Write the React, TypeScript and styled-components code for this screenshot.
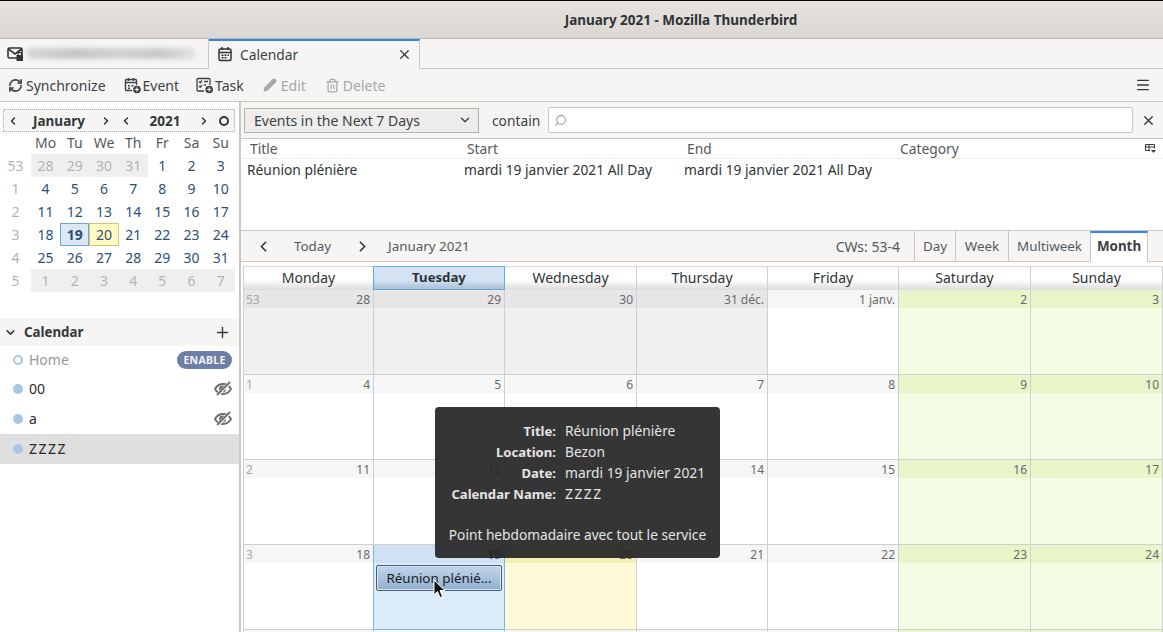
import React from 'react'
import styled, { createGlobalStyle } from 'styled-components'
import { RefreshCw, Pencil, Trash2, Plus, ChevronDown, ChevronLeft, ChevronRight, X, Search, Menu } from 'lucide-react'

const Global = createGlobalStyle`
  html, body { margin: 0; padding: 0; overflow: hidden; background: #fff; }
  * { box-sizing: border-box; }
  body { font-family: "Noto Sans", sans-serif; font-size: 13.8px; color: #2e3436; }
`

const Window = styled.div`
  width: 1163px;
  height: 632px;
  position: relative;
  overflow: hidden;
  display: flex;
  flex-direction: column;
`

const TitleBar = styled.div`
  height: 39px;
  flex: none;
  border-top: 1px solid #000;
  border-bottom: 1px solid #bfb8b1;
  background: linear-gradient(#e6e3df, #dbd7d2);
  display: flex;
  align-items: center;
  justify-content: center;
  padding-left: 199px;
  font-size: 13.5px;
  font-weight: 700;
  color: #2e3436;
`

const TabStrip = styled.div`
  height: 30px;
  flex: none;
  display: flex;
  background: #f6f5f4;
  border-bottom: 1px solid #cdc7c2;
`

const InactiveTab = styled.div`
  width: 209px;
  display: flex;
  align-items: center;
  gap: 3px;
  padding-left: 7px;
  border-right: 1px solid #cdc7c2;
`

const Smudge = styled.div`
  width: 168px;
  height: 11px;
  background: linear-gradient(90deg, #d6d6d6, #c6c6c6 30%, #d2d2d2 55%, #c8c8c8 80%, #e2e2e2);
  border-radius: 4px;
  filter: blur(2px);
`

const ActiveTab = styled.div`
  width: 211px;
  height: 30px;
  display: flex;
  align-items: center;
  padding: 0 7px 2px 8px;
  gap: 7px;
  background: #f6f5f4;
  border-top: 2px solid #3584e4;
  border-right: 1px solid #cdc7c2;
  color: #3d4245;
`

const TabClose = styled.span`
  margin-left: auto;
  display: flex;
`

const Toolbar = styled.div`
  height: 33px;
  flex: none;
  display: flex;
  align-items: center;
  padding: 0 12px 0 8px;
  background: #f6f5f4;
  border-bottom: 1px solid #cdc7c2;
`

const ToolButton = styled.div<{ $off?: boolean; $gap: number; $inner: number }>`
  display: flex;
  align-items: center;
  gap: ${p => p.$inner}px;
  margin-right: ${p => p.$gap}px;
  color: ${p => (p.$off ? '#a5a8a9' : '#3d4245')};
  font-size: 14px;
`

const ToolEnd = styled.div`
  margin-left: auto;
  display: flex;
`

const Main = styled.div`
  flex: 1;
  display: flex;
  min-height: 0;
`

const Sidebar = styled.div`
  width: 241px;
  flex: none;
  display: flex;
  flex-direction: column;
  border-right: 2px solid #cdc7c2;
  background: #fff;
`

const MiniHead = styled.div`
  margin: 7px 4px 0 3px;
  height: 23px;
  flex: none;
  display: flex;
  align-items: center;
  background: #f6f5f4;
  border: 1px dotted #a8a8a8;
  font-weight: 700;
  color: #33383a;
  font-size: 13.5px;
`

const MiniLabel = styled.span<{ $w: number }>`
  width: ${p => p.$w}px;
  text-align: center;
`

const MiniNav = styled.span<{ $w: number }>`
  width: ${p => p.$w}px;
  display: flex;
  justify-content: center;
  color: #33383a;
`

const TodayDot = styled.span`
  width: 10px;
  height: 10px;
  margin-left: 5px;
  border: 2.5px solid #33383a;
  border-radius: 50%;
`

const MiniGrid = styled.div`
  display: grid;
  grid-template-columns: 31px repeat(7, 29.2px);
  grid-template-rows: 22px repeat(6, 23px);
  height: 160px;
  flex: none;
`

const MiniCell = styled.div<{ $kind?: string }>`
  display: flex;
  align-items: center;
  justify-content: center;
  font-size: 14px;
  padding-bottom: 1px;
  color: ${p =>
    p.$kind === 'week' || p.$kind === 'other' ? '#b4b4b4' : p.$kind === 'head' ? '#55595b' : '#2d4f78'};
  background: ${p =>
    p.$kind === 'other' ? '#efefef' : p.$kind === 'sel' ? '#dce8f4' : p.$kind === 'today' ? '#fff9c4' : 'transparent'};
  border: ${p =>
    p.$kind === 'sel' ? '1px solid #64a8dc' : p.$kind === 'today' ? '1px solid #d8c474' : 'none'};
  font-weight: ${p => (p.$kind === 'sel' ? 700 : 400)};
`

const ListHead = styled.div`
  margin-top: 26px;
  height: 28px;
  flex: none;
  display: flex;
  align-items: center;
  padding: 0 8px 0 4px;
  background: #f6f5f4;
  font-weight: 700;
  font-size: 13.3px;
  color: #33383a;
  gap: 7px;
`

const PlusWrap = styled.span`
  margin-left: auto;
  display: flex;
`

const CalRow = styled.div<{ $picked?: boolean; $h: number }>`
  height: ${p => p.$h}px;
  flex: none;
  display: flex;
  align-items: center;
  padding: 0 7px 0 13px;
  gap: 6px;
  background: ${p => (p.$picked ? '#dfdfdf' : '#fff')};
`

const Dot = styled.span<{ $hollow?: boolean }>`
  width: 10px;
  height: 10px;
  flex: none;
  border-radius: 50%;
  background: ${p => (p.$hollow ? '#fff' : '#a8c6e6')};
  border: ${p => (p.$hollow ? '2px solid #a8c6e6' : 'none')};
`

const CalName = styled.span<{ $dim?: boolean }>`
  flex: 1;
  padding-bottom: 2px;
  color: ${p => (p.$dim ? '#969696' : '#2a2a2a')};
  font-size: 14px;
`

const Zeds = styled.span`
  letter-spacing: 1.5px;
`

const EnablePill = styled.span`
  height: 18px;
  width: 55px;
  border-radius: 9px;
  background: #6d7fa6;
  color: #f2f4f8;
  font-size: 10.5px;
  font-weight: 700;
  display: flex;
  align-items: center;
  justify-content: center;
  letter-spacing: 0.3px;
`

const Content = styled.div`
  flex: 1;
  min-width: 0;
  display: flex;
  flex-direction: column;
`

const FilterBar = styled.div`
  height: 37px;
  flex: none;
  display: flex;
  align-items: center;
  padding: 0 7px 0 3px;
  background: #f6f5f4;
  border-bottom: 1px solid #cdc7c2;
`

const FilterSelect = styled.div`
  width: 235px;
  height: 25px;
  display: flex;
  align-items: center;
  justify-content: space-between;
  padding: 0 6px 0 9px;
  border: 1px solid #b5b1ac;
  background: #eeedeb;
  color: #3d4245;
  font-size: 14px;
`

const ContainLabel = styled.span`
  margin: 0 8px 0 13px;
  color: #3d4245;
`

const SearchBox = styled.div`
  width: 585px;
  height: 26px;
  display: flex;
  align-items: center;
  padding-left: 5px;
  background: #fff;
  border: 1px solid #cdc7c2;
  border-radius: 2px;
`

const SearchClose = styled.span`
  margin-left: auto;
  display: flex;
`

const ResultHead = styled.div`
  height: 20px;
  flex: none;
  display: grid;
  grid-template-columns: 217px 220px 213px 1fr 18px;
  align-items: center;
  padding-left: 9px;
  border-bottom: 1px solid #f1f1f1;
  color: #55595b;
`

const ResultBody = styled.div`
  height: 72px;
  flex: none;
  display: grid;
  grid-template-columns: 217px 220px 1fr;
  align-content: start;
  padding: 1px 0 0 6px;
  color: #2e3436;
  border-bottom: 1px solid #cdc7c2;
`

const PickerIcon = styled.svg`
  display: block;
`

const NavBar = styled.div`
  height: 31px;
  flex: none;
  display: flex;
  align-items: stretch;
  background: #f6f5f4;
  border-bottom: 1px solid #cdc7c2;
  padding-left: 14px;
  font-size: 13.4px;
  color: #55595b;
`

const NavItem = styled.span<{ $w: number }>`
  width: ${p => p.$w}px;
  display: flex;
  align-items: center;
  color: #55595b;
`

const NavArrow = styled(NavItem)`
  color: #33383a;
`

const WeekCount = styled.span`
  margin-left: auto;
  display: flex;
  align-items: center;
  padding-right: 14px;
  font-size: 14px;
`

const ViewTab = styled.span<{ $on?: boolean; $w: number }>`
  width: ${p => p.$w}px;
  display: flex;
  align-items: center;
  justify-content: center;
  border-left: 1px solid #cdc7c2;
  border-top: ${p => (p.$on ? '2px solid #3584e4' : 'none')};
  background: ${p => (p.$on ? '#fff' : 'transparent')};
  font-weight: ${p => (p.$on ? 700 : 400)};
  color: ${p => (p.$on ? '#3d4245' : '#55595b')};
  margin-bottom: ${p => (p.$on ? '-1px' : '0')};
  ${p => p.$on && 'border-right: 1px solid #cdc7c2; margin-right: 15px; padding-bottom: 3px;'}
`

const MonthWrap = styled.div`
  flex: 1;
  min-height: 0;
  background: #fff;
  padding: 4px 0 0 2px;
  overflow: hidden;
`

const MonthGrid = styled.div`
  width: 920px;
  display: grid;
  grid-template-columns: 130px 131px 132px 131px 131px 132px 132px;
  grid-template-rows: 23px repeat(4, 85px) 20px;
  border-left: 1px solid #cfcfcf;
  border-top: 1px solid #d8d8d8;
`

const DayHead = styled.div<{ $sel?: boolean }>`
  display: flex;
  align-items: center;
  justify-content: center;
  padding-bottom: 3px;
  font-weight: ${p => (p.$sel ? 700 : 400)};
  font-size: ${p => (p.$sel ? '13.2px' : '14px')};
  color: #2e3436;
  background: ${p =>
    p.$sel ? 'linear-gradient(#d3e3f3 60%, #a9bfd4)' : 'linear-gradient(#fff 55%, #dcdcdc)'};
  border-right: 1px solid ${p => (p.$sel ? '#64a8dc' : '#cfcfcf')};
  ${p => p.$sel && 'border-top: 1px solid #64a8dc; border-left: 1px solid #64a8dc; border-bottom: 1px solid #64a8dc; margin-left: -1px; margin-top: -1px;'}
`

const Cell = styled.div<{ $body: string; $edge?: string }>`
  background: ${p => p.$body};
  border-right: 1px solid ${p => p.$edge || '#cfcfcf'};
  border-bottom: 1px solid ${p => p.$edge || '#cfcfcf'};
  ${p => p.$edge && `box-shadow: -1px 0 0 ${p.$edge};`}
  position: relative;
  display: flex;
  flex-direction: column;
`

const DayBar = styled.div<{ $bar: string; $bold?: boolean }>`
  height: 18px;
  flex: none;
  background: ${p => p.$bar};
  display: flex;
  align-items: center;
  justify-content: space-between;
  padding: 0 3px 0 2px;
  font-size: 12px;
  color: #666a6c;
  font-weight: ${p => (p.$bold ? 700 : 400)};
`

const WeekNo = styled.span`
  color: #a6a6a6;
`

const EventBox = styled.div`
  margin: 2px 2px 0 2px;
  height: 26px;
  display: flex;
  align-items: center;
  justify-content: center;
  border: 1px solid #4e5d70;
  border-radius: 2px;
  background: linear-gradient(#c2d6ec, #90aed2);
  box-shadow: inset 0 0 0 1px #d5e2f0;
  color: #1c1c1c;
  font-size: 13.4px;
`

const Tooltip = styled.div`
  position: absolute;
  left: 435px;
  top: 407px;
  width: 285px;
  height: 151px;
  border-radius: 4px;
  background: rgba(38, 38, 38, 0.93);
  color: #e4e4e4;
  padding: 13px 13px 0;
  display: flex;
  flex-direction: column;
`

const TipGrid = styled.div`
  display: grid;
  grid-template-columns: 108px 1fr;
  column-gap: 9px;
  grid-auto-rows: 21px;
  align-items: center;
  white-space: nowrap;
`

const TipKey = styled.span`
  text-align: right;
  font-weight: 700;
  font-size: 13.1px;
`

const TipNote = styled.div`
  margin-top: 21px;
  text-align: center;
  white-space: nowrap;
  font-size: 13.7px;
`

const Cursor = styled.svg`
  position: absolute;
  left: 433px;
  top: 579px;
`

const MailIcon = () => (
  <svg width="17" height="16" viewBox="0 0 17 16" fill="none" stroke="#2e3436" strokeWidth="1.6">
    <rect x="1" y="2" width="14" height="10" rx="1.5" />
    <path d="M1.5 3l6.5 5 6.5-5" />
    <rect x="9.500" y="9" width="6.500" height="6" fill="#2e3436" stroke="none" />
    <path d="M11 9.500V8.200a1.800 1.800 0 013.600 0v1.300" strokeWidth="1.200" />
  </svg>
)

const CalIcon = ({ size = 16 }: { size?: number }) => (
  <svg width={size} height={size} viewBox="0 0 16 16" fill="none" stroke="#2e3436">
    <rect x="2" y="3" width="12" height="11.500" rx="1.500" strokeWidth="1.500" />
    <path d="M2 6.500h12M5 1v3M11 1v3" strokeWidth="1.500" />
    <path d="M4.500 8.500h2v1.500h-2zM7.500 8.500h2v1.500h-2zM10.500 8.500h1.500v1.500h-1.500zM4.500 11h2v1.500h-2zM7.500 11h2v1.500h-2z" fill="#2e3436" stroke="none" />
  </svg>
)

const EventIcon = () => (
  <svg width="18" height="17" viewBox="0 0 18 17" fill="none" stroke="#3d4245" strokeWidth="1.400">
    <path d="M8 13.500H2.500a1 1 0 01-1-1V3.500a1 1 0 011-1h9a1 1 0 011 1V8" />
    <path d="M1.500 5.500h11M4.500 1v3M9.500 1v3" />
    <path d="M4 8h2v1.500H4zM7.500 8h2v1.500h-2zM4 10.500h2V12H4z" fill="#3d4245" stroke="none" />
    <circle cx="13" cy="12.500" r="3.800" fill="#3d4245" stroke="none" />
    <path d="M13 10.500v4M11 12.500h4" stroke="#fff" strokeWidth="1.200" />
  </svg>
)

const TaskIcon = () => (
  <svg width="18" height="17" viewBox="0 0 18 17" fill="none" stroke="#3d4245" strokeWidth="1.300">
    <path d="M8 14H2a1 1 0 01-1-1V2.500a1 1 0 011-1h11a1 1 0 011 1V8" />
    <path d="M3 4.500l1.200 1.200L6 3.500M3 9l1.200 1.200L6 8M8 4.500h4M8 8h2" />
    <circle cx="13.200" cy="12.500" r="3.800" fill="#3d4245" stroke="none" />
    <path d="M13.200 10.500v4M11.200 12.500h4" stroke="#fff" strokeWidth="1.200" />
  </svg>
)

const HiddenEye = () => (
  <svg width="18" height="16" viewBox="0 0 18 16" fill="none">
    <path d="M1 8c2-3.500 4.800-5 8-5s6 1.500 8 5c-2 3.500-4.800 5-8 5s-6-1.500-8-5z" stroke="#6b6b6b" strokeWidth="1.800" />
    <circle cx="8.500" cy="8" r="3.500" fill="#6b6b6b" />
    <path d="M16 1.500L3 14.500" stroke="#fff" strokeWidth="3.400" />
    <path d="M16 1L3 14" stroke="#6b6b6b" strokeWidth="1.800" />
  </svg>
)

type Day = { n: string; week?: string; kind?: string; bold?: boolean; event?: boolean }

const heads = ['Monday', 'Tuesday', 'Wednesday', 'Thursday', 'Friday', 'Saturday', 'Sunday']

const rows: Day[][] = [
  [{ n: '28', week: '53', kind: 'other' }, { n: '29', kind: 'other' }, { n: '30', kind: 'other' }, { n: '31 déc.', kind: 'other' }, { n: '1 janv.' }, { n: '2' }, { n: '3' }],
  [{ n: '4', week: '1' }, { n: '5' }, { n: '6' }, { n: '7' }, { n: '8' }, { n: '9' }, { n: '10' }],
  [{ n: '11', week: '2' }, { n: '12' }, { n: '13' }, { n: '14' }, { n: '15' }, { n: '16' }, { n: '17' }],
  [{ n: '18', week: '3' }, { n: '19', kind: 'sel', bold: true, event: true }, { n: '20', kind: 'today' }, { n: '21' }, { n: '22' }, { n: '23' }, { n: '24' }],
  [{ n: '' }, { n: '' }, { n: '' }, { n: '' }, { n: '' }, { n: '' }, { n: '' }],
]

const tones = (kind: string | undefined, col: number) => {
  if (kind === 'other') return { body: '#f0f0f0', bar: '#e6e6e6' }
  if (kind === 'sel') return { body: '#dcecfb', bar: '#cfe1f3', edge: '#7ab4ea' }
  if (kind === 'today') return { body: '#fefad8', bar: '#f5eeb4' }
  if (col >= 5) return { body: '#f3fde4', bar: '#e8f5c9' }
  return { body: '#fff', bar: '#f6f6f6' }
}

const mini = [
  ['53', '28', '29', '30', '31', '1', '2', '3'],
  ['1', '4', '5', '6', '7', '8', '9', '10'],
  ['2', '11', '12', '13', '14', '15', '16', '17'],
  ['3', '18', '19', '20', '21', '22', '23', '24'],
  ['4', '25', '26', '27', '28', '29', '30', '31'],
  ['5', '1', '2', '3', '4', '5', '6', '7'],
]

const miniKind = (r: number, c: number) => {
  if (c === 0) return 'week'
  if ((r === 0 && c <= 4) || r === 5) return 'other'
  if (r === 3 && c === 2) return 'sel'
  if (r === 3 && c === 3) return 'today'
  return undefined
}

const App = () => {
  return (
    <Window>
      <Global />
      <TitleBar>January 2021 - Mozilla Thunderbird</TitleBar>
      <TabStrip>
        <InactiveTab>
          <MailIcon />
          <Smudge />
        </InactiveTab>
        <ActiveTab>
          <CalIcon />
          Calendar
          <TabClose><X size={15} strokeWidth={2} color="#33383a" /></TabClose>
        </ActiveTab>
      </TabStrip>
      <Toolbar>
        <ToolButton $gap={18} $inner={3}><RefreshCw size={15} strokeWidth={2.6} />Synchronize</ToolButton>
        <ToolButton $gap={17} $inner={1}><EventIcon />Event</ToolButton>
        <ToolButton $gap={19} $inner={1}><TaskIcon />Task</ToolButton>
        <ToolButton $off $gap={19} $inner={4}><Pencil size={14} fill="#a5a8a9" />Edit</ToolButton>
        <ToolButton $off $gap={0} $inner={3}><Trash2 size={15} />Delete</ToolButton>
        <ToolEnd><Menu size={16} strokeWidth={2} color="#33383a" /></ToolEnd>
      </Toolbar>
      <Main>
        <Sidebar>
          <MiniHead>
            <MiniNav $w={18}><ChevronLeft size={12} strokeWidth={3} /></MiniNav>
            <MiniLabel $w={74}>January</MiniLabel>
            <MiniNav $w={20}><ChevronRight size={12} strokeWidth={3} /></MiniNav>
            <MiniNav $w={20}><ChevronLeft size={12} strokeWidth={3} /></MiniNav>
            <MiniLabel $w={58}>2021</MiniLabel>
            <MiniNav $w={20}><ChevronRight size={12} strokeWidth={3} /></MiniNav>
            <TodayDot />
          </MiniHead>
          <MiniGrid>
            <MiniCell />
            {['Mo', 'Tu', 'We', 'Th', 'Fr', 'Sa', 'Su'].map(d => (
              <MiniCell key={d} $kind="head">{d}</MiniCell>
            ))}
            {mini.map((row, r) =>
              row.map((v, c) => (
                <MiniCell key={`${r}-${c}`} $kind={miniKind(r, c)}>{v}</MiniCell>
              )),
            )}
          </MiniGrid>
          <ListHead>
            <ChevronDown size={13} strokeWidth={2.8} />
            Calendar
            <PlusWrap><Plus size={17} strokeWidth={2} /></PlusWrap>
          </ListHead>
          <CalRow $h={28}>
            <Dot $hollow />
            <CalName $dim>Home</CalName>
            <EnablePill>ENABLE</EnablePill>
          </CalRow>
          <CalRow $h={30}>
            <Dot />
            <CalName>00</CalName>
            <HiddenEye />
          </CalRow>
          <CalRow $h={30}>
            <Dot />
            <CalName>a</CalName>
            <HiddenEye />
          </CalRow>
          <CalRow $h={30} $picked>
            <Dot />
            <CalName><Zeds>ZZZZ</Zeds></CalName>
          </CalRow>
        </Sidebar>
        <Content>
          <FilterBar>
            <FilterSelect>
              Events in the Next 7 Days
              <ChevronDown size={14} strokeWidth={2.4} />
            </FilterSelect>
            <ContainLabel>contain</ContainLabel>
            <SearchBox><Search size={13} color="#9a9a9a" style={{ transform: 'scaleX(-1)' }} /></SearchBox>
            <SearchClose><X size={15} strokeWidth={2.2} color="#33383a" /></SearchClose>
          </FilterBar>
          <ResultHead>
            <span>Title</span>
            <span>Start</span>
            <span>End</span>
            <span>Category</span>
            <PickerIcon width="11" height="10" viewBox="0 0 11 10" fill="none" stroke="#33383a">
              <path d="M.5 6.500V.5h9v4M.5 3h9M4 .5v6M.5 6.500H5" />
              <path d="M6 6h5L8.500 9z" fill="#33383a" stroke="none" />
            </PickerIcon>
          </ResultHead>
          <ResultBody>
            <span>Réunion plénière</span>
            <span>mardi 19 janvier 2021 All Day</span>
            <span>mardi 19 janvier 2021 All Day</span>
          </ResultBody>
          <NavBar>
            <NavArrow $w={39}><ChevronLeft size={17} strokeWidth={2.4} /></NavArrow>
            <NavItem $w={60}>Today</NavItem>
            <NavArrow $w={34}><ChevronRight size={17} strokeWidth={2.4} /></NavArrow>
            <NavItem $w={100}>January 2021</NavItem>
            <WeekCount>CWs: 53-4</WeekCount>
            <ViewTab $w={41}>Day</ViewTab>
            <ViewTab $w={53}>Week</ViewTab>
            <ViewTab $w={82}>Multiweek</ViewTab>
            <ViewTab $w={58} $on>Month</ViewTab>
          </NavBar>
          <MonthWrap>
            <MonthGrid>
              {heads.map(h => (
                <DayHead key={h} $sel={h === 'Tuesday'}>{h}</DayHead>
              ))}
              {rows.flatMap((row, r) =>
                row.map((d, c) => {
                  const t = tones(d.kind, c)
                  return (
                    <Cell key={`${r}-${c}`} $body={t.body} $edge={t.edge}>
                      <DayBar $bar={t.bar} $bold={d.bold}>
                        <WeekNo>{d.week}</WeekNo>
                        <span>{d.n}</span>
                      </DayBar>
                      {d.event && <EventBox>Réunion plénié...</EventBox>}
                    </Cell>
                  )
                }),
              )}
            </MonthGrid>
          </MonthWrap>
        </Content>
      </Main>
      <Tooltip>
        <TipGrid>
          <TipKey>Title:</TipKey><span>Réunion plénière</span>
          <TipKey>Location:</TipKey><span>Bezon</span>
          <TipKey>Date:</TipKey><span>mardi 19 janvier 2021</span>
          <TipKey>Calendar Name:</TipKey><Zeds>ZZZZ</Zeds>
        </TipGrid>
        <TipNote>Point hebdomadaire avec tout le service</TipNote>
      </Tooltip>
      <Cursor width="13" height="20" viewBox="0 0 13 20">
        <path d="M1 1v15l3.500-3.500 2.500 6 2.500-1-2.500-6h5z" fill="#111" stroke="#fff" strokeWidth="1" />
      </Cursor>
    </Window>
  )
}

export default App
